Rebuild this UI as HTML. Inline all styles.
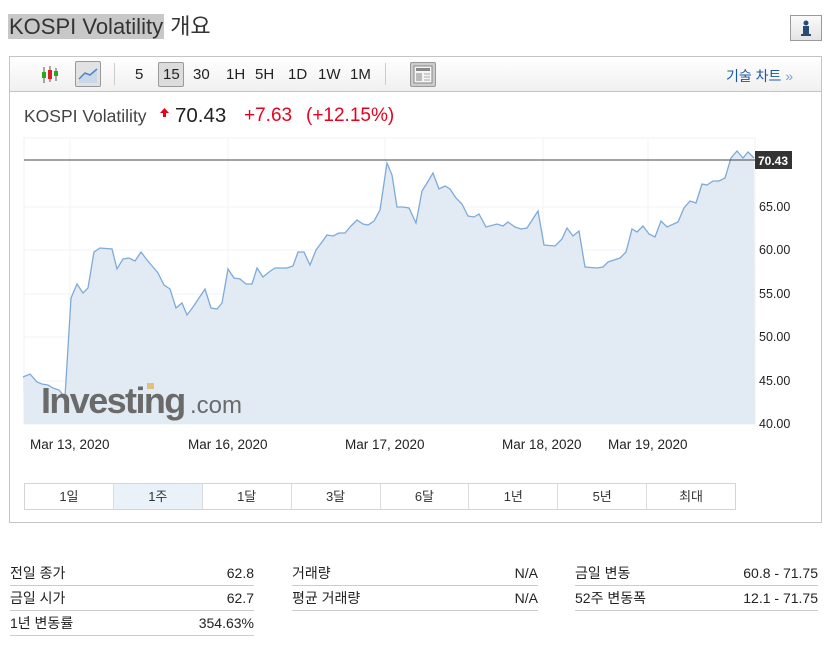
<!DOCTYPE html>
<html><head><meta charset="utf-8"><style>
*{margin:0;padding:0;box-sizing:border-box}
body{width:838px;height:662px;background:#fff;font-family:"Liberation Sans","Noto Sans CJK KR",sans-serif;position:relative;overflow:hidden;color:#222}
.a{position:absolute;white-space:nowrap}
.title{left:8px;top:14px;height:25px;font-size:22px;line-height:25px;color:#333}
.title span{background:#c8c8c8;padding:0 1px}
.info{left:790px;top:15px;width:32px;height:26px;border:1px solid #9a9a9a;background:linear-gradient(#fafafa,#e4e4e4)}
.box{left:9px;top:56px;width:813px;height:467px;border:1px solid #c4c4c4}
.tb{left:10px;top:57px;width:811px;height:35px;background:linear-gradient(#fff,#f0f0f0);border-bottom:1px solid #c4c4c4}
.tb .t{position:absolute;top:9px;font-size:15px;color:#222;font-weight:normal}
.btn{position:absolute;border:1px solid #999;border-radius:2px;background:#dcdcdc}
.sep{position:absolute;top:6px;width:1px;height:22px;background:#ccc}
.tabs{left:24px;top:483px;width:712px;height:27px;border:1px solid #d4d4d4;display:flex}
.tabs div{flex:1;text-align:center;font-size:13px;line-height:25px;border-right:1px solid #dcdcdc;color:#333}
.tabs div:last-child{border-right:none}
.row{position:absolute;height:25px;border-bottom:1px solid #ccc;font-size:14px;line-height:25px;color:#222}
.row b{position:absolute;right:0;font-weight:normal}
.p{top:104px;line-height:24px}
</style></head><body>
<div class="a title"><span>KOSPI Volatility</span> 개요</div>
<div class="a info"><svg width="30" height="24"><circle cx="15" cy="7" r="2.5" fill="#2a4a72"/><rect x="12" y="10" width="6" height="9" fill="#2a4a72"/><rect x="10" y="18" width="10" height="2" fill="#2a4a72"/></svg></div>
<div class="a box"></div>
<div class="a tb">
 <svg class="a" style="left:29px;top:8px" width="24" height="20"><g stroke="#555" stroke-width="1"><line x1="5" y1="2" x2="5" y2="18"/><line x1="11" y1="1" x2="11" y2="17"/><line x1="17" y1="3" x2="17" y2="16"/></g><rect x="3" y="7" width="4" height="6" fill="#2a2"/><rect x="9" y="5" width="4" height="9" fill="#d22"/><rect x="15" y="6" width="4" height="5" fill="#2a2"/></svg>
 <div class="btn" style="left:65px;top:4px;width:26px;height:26px;background:#e2e2e2"><svg width="24" height="24"><path d="M3 17 L9 11 L14 13 L21 7 L21 21 L3 21Z" fill="#c9d9ea"/><path d="M3 17 L9 11 L14 13 L21 7" stroke="#4d86c4" stroke-width="1.5" fill="none"/></svg></div>
 <div class="sep" style="left:104px"></div>
 <span class="t" style="left:125px">5</span>
 <div class="btn" style="left:148px;top:5px;width:26px;height:25px"></div>
 <span class="t" style="left:153px">15</span>
 <span class="t" style="left:183px">30</span>
 <span class="t" style="left:216px">1H</span>
 <span class="t" style="left:245px">5H</span>
 <span class="t" style="left:278px">1D</span>
 <span class="t" style="left:308px">1W</span>
 <span class="t" style="left:340px">1M</span>
 <div class="sep" style="left:375px"></div>
 <div class="btn" style="left:400px;top:5px;width:26px;height:25px;background:#ccc"><svg width="24" height="23"><rect x="3" y="3" width="18" height="17" fill="#f4f4f4" stroke="#888"/><rect x="5" y="5" width="14" height="3" fill="#888"/><rect x="5" y="10" width="6" height="8" fill="#bbb"/><g stroke="#aaa"><line x1="13" y1="11" x2="19" y2="11"/><line x1="13" y1="14" x2="19" y2="14"/><line x1="13" y1="17" x2="19" y2="17"/></g></svg></div>
 <span class="t" style="left:716px;color:#1a56a6;font-size:14px">기술 차트 <span style="color:#7aa0cc">»</span></span>
</div>
<div class="a p" style="left:24px;font-size:17.5px;color:#444">KOSPI Volatility</div>
<svg class="a" style="left:160px;top:108px" width="9" height="9"><path d="M4.5 0 L9 5 L6 5 L6 9 L3 9 L3 5 L0 5Z" fill="#e8001c"/></svg>
<div class="a p" style="left:175px;font-size:20.5px;color:#222">70.43</div>
<div class="a p" style="left:244px;font-size:19px;color:#e8001c">+7.63</div>
<div class="a p" style="left:306px;font-size:19px;color:#e8001c">(+12.15%)</div>
<svg class="a" style="left:0;top:0" width="838" height="470">
 <rect x="24" y="138" width="731" height="286" fill="#fff" stroke="#eef0f5"/>
 <g stroke="#f1f3f7"><line x1="70" y1="138" x2="70" y2="424"/><line x1="228" y1="138" x2="228" y2="424"/><line x1="385" y1="138" x2="385" y2="424"/><line x1="543" y1="138" x2="543" y2="424"/><line x1="648" y1="138" x2="648" y2="424"/>
 <line x1="24" y1="207" x2="755" y2="207"/><line x1="24" y1="250" x2="755" y2="250"/><line x1="24" y1="294" x2="755" y2="294"/><line x1="24" y1="337" x2="755" y2="337"/><line x1="24" y1="381" x2="755" y2="381"/></g>
 <polygon fill="#e2ebf3" points="24,424 23,377 30,374 37,382 42,384 48,385 53,388 59,390 65,397 71,298 77,284 83,293 88,288 94,252 100,248 112,249 117,269 123,259 129,258 135,261 141,252 147,260 153,267 158,273 164,285 170,289 176,308 182,303 187,315 193,307 199,298 205,289 211,308 217,309 222,303 228,269 234,278 240,279 246,284 252,284 257,268 263,277 269,272 275,268 287,268 293,266 298,252 304,252 310,265 316,250 322,242 327,235 333,236 339,233 345,233 351,226 357,220 363,224 368,225 374,221 380,210 387,163 392,175 397,207 403,207 409,208 416,223 422,191 427,183 433,173 439,189 445,186 450,189 456,198 462,204 468,216 474,217 479,214 486,227 497,224 503,226 508,222 515,227 521,229 527,228 538,211 544,245 555,246 562,239 567,228 573,236 579,231 585,267 597,268 603,267 608,262 614,260 620,258 626,252 632,229 637,232 643,226 649,234 655,237 661,221 667,227 678,222 684,208 690,201 696,203 702,184 707,185 713,181 719,181 725,178 731,158 737,151 743,158 748,152 754,158 755,424"/>
 <polyline fill="none" stroke="#7eaad8" stroke-width="1.3" points="23,377 30,374 37,382 42,384 48,385 53,388 59,390 65,397 71,298 77,284 83,293 88,288 94,252 100,248 112,249 117,269 123,259 129,258 135,261 141,252 147,260 153,267 158,273 164,285 170,289 176,308 182,303 187,315 193,307 199,298 205,289 211,308 217,309 222,303 228,269 234,278 240,279 246,284 252,284 257,268 263,277 269,272 275,268 287,268 293,266 298,252 304,252 310,265 316,250 322,242 327,235 333,236 339,233 345,233 351,226 357,220 363,224 368,225 374,221 380,210 387,163 392,175 397,207 403,207 409,208 416,223 422,191 427,183 433,173 439,189 445,186 450,189 456,198 462,204 468,216 474,217 479,214 486,227 497,224 503,226 508,222 515,227 521,229 527,228 538,211 544,245 555,246 562,239 567,228 573,236 579,231 585,267 597,268 603,267 608,262 614,260 620,258 626,252 632,229 637,232 643,226 649,234 655,237 661,221 667,227 678,222 684,208 690,201 696,203 702,184 707,185 713,181 719,181 725,178 731,158 737,151 743,158 748,152 754,158"/>
 <line x1="24" y1="160" x2="755" y2="160" stroke="#444" stroke-width="1"/>
 <rect x="755" y="151" width="37" height="18" fill="#333"/>
 <text x="773" y="165" fill="#fff" font-size="12" font-weight="bold" text-anchor="middle" font-family="Liberation Sans">70.43</text>
 <g font-size="12.5" fill="#222" font-family="Liberation Sans"><text x="759" y="211">65.00</text><text x="759" y="254">60.00</text><text x="759" y="298">55.00</text><text x="759" y="341">50.00</text><text x="759" y="385">45.00</text><text x="759" y="428">40.00</text>
 <text x="30" y="449" font-size="13.5">Mar 13, 2020</text><text x="188" y="449" font-size="13.5">Mar 16, 2020</text><text x="345" y="449" font-size="13.5">Mar 17, 2020</text><text x="502" y="449" font-size="13.5">Mar 18, 2020</text><text x="608" y="449" font-size="13.5">Mar 19, 2020</text></g>
 <text x="41" y="413" font-size="36" font-weight="bold" fill="#6a6a6a" letter-spacing="-1.6" font-family="Liberation Sans">Investing</text>
 <rect x="147" y="383" width="7" height="6" fill="#e3c07a"/>
 <text x="190" y="413" font-size="24" fill="#6a6a6a" font-family="Liberation Sans">.com</text>
</svg>
<div class="a tabs"><div>1일</div><div style="background:#eaf1f8">1주</div><div>1달</div><div>3달</div><div>6달</div><div>1년</div><div>5년</div><div>최대</div></div>
<div class="row" style="left:10px;top:561px;width:244px">전일 종가<b>62.8</b></div>
<div class="row" style="left:10px;top:586px;width:244px">금일 시가<b>62.7</b></div>
<div class="row" style="left:10px;top:611px;width:244px">1년 변동률<b>354.63%</b></div>
<div class="row" style="left:292px;top:561px;width:246px">거래량<b>N/A</b></div>
<div class="row" style="left:292px;top:586px;width:246px">평균 거래량<b>N/A</b></div>
<div class="row" style="left:575px;top:561px;width:243px">금일 변동<b>60.8 - 71.75</b></div>
<div class="row" style="left:575px;top:586px;width:243px">52주 변동폭<b>12.1 - 71.75</b></div>
</body></html>
